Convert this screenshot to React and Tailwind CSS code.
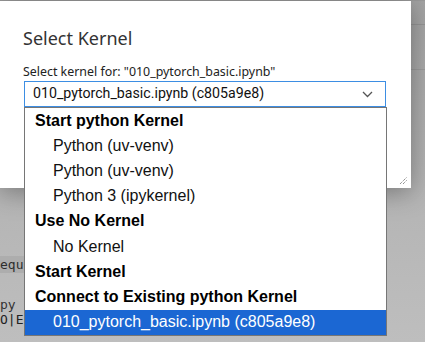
import React from 'react';

const items = [
  { label: 'Start python Kernel', header: true },
  { label: 'Python (uv-venv)' },
  { label: 'Python (uv-venv)' },
  { label: 'Python 3 (ipykernel)' },
  { label: 'Use No Kernel', header: true },
  { label: 'No Kernel' },
  { label: 'Start Kernel', header: true },
  { label: 'Connect to Existing python Kernel', header: true },
  { label: '010_pytorch_basic.ipynb (c805a9e8)', selected: true },
];

const arial = { fontFamily: '"Liberation Sans", Arial, sans-serif' };

export default function App() {
  return (
    <div className="relative w-[425px] h-[342px] overflow-hidden bg-[#bdbdbd]">
      {/* page behind the overlay */}
      <div className="flex flex-col h-full bg-gradient-to-b from-[#a3a3a3] via-[#b3b3b3] to-[#bebebe]">
        <div className="h-px bg-[#9a9a9a]" />
        <div className="h-[24px] border-b border-[#959595]" />
        <div className="h-[45px] border-b border-[#9c9c9c]" />
        <div className="h-[186px]" />
        <div
          className="h-[17px] w-[40px] bg-[#adadad] text-[#2e2e2e] text-[13px] leading-[17px] whitespace-nowrap"
          style={{ fontFamily: '"DejaVu Sans Mono", monospace' }}
        >
          equ:
        </div>
        <div
          className="mt-[25px] text-[13px] leading-[14px] text-[#333] whitespace-nowrap"
          style={{ fontFamily: '"DejaVu Sans Mono", monospace' }}
        >
          py <span className="text-[#8a5a1a]">r</span>
        </div>
        <div
          className="text-[13px] leading-[15px] text-[#222] whitespace-nowrap"
          style={{ fontFamily: '"DejaVu Sans Mono", "Noto Sans CJK KR", monospace' }}
        >
          O|E
        </div>
      </div>

      {/* dialog */}
      <div className="absolute left-0 top-px w-[411px] h-[187px] bg-white shadow-[0_4px_24px_rgba(0,0,0,0.35)]">
        <div className="pl-[23px] pt-[26px]">
          <div
            className="text-[18px] leading-[22px] text-[#333]"
            style={{ fontFamily: '"Noto Sans", sans-serif' }}
          >
            Select Kernel
          </div>
          <div
            className="mt-[16px] text-[12.4px] leading-[14px] text-[#222]"
            style={{ fontFamily: '"Noto Sans", sans-serif' }}
          >
            Select kernel for: "010_pytorch_basic.ipynb"
          </div>
          <div
            className="mt-[2px] ml-px w-[362px] h-[26px] border border-[#3d8ee3] flex items-center pl-[8px] pr-[12px] text-[14.2px] text-[#111]"
            style={{ fontFamily: 'Roboto, "Liberation Sans", sans-serif' }}
          >
            <span className="flex-1">010_pytorch_basic.ipynb (c805a9e8)</span>
            <svg width="11" height="7" viewBox="0 0 11 7">
              <path d="M1 1l4.5 4.5L10 1" fill="none" stroke="#555" strokeWidth="1.3" />
            </svg>
          </div>
        </div>
        {/* button edge behind list */}
        <div className="absolute left-[300px] top-[131px] w-[87px] h-[31px] bg-[#1a73e8]" />
        {/* resize handle */}
        <svg className="absolute right-[3px] bottom-[3px]" width="9" height="9" viewBox="0 0 9 9">
          <path d="M1 8L8 1M4 8L8 4" stroke="#666" strokeWidth="1" strokeDasharray="1 1" />
        </svg>
      </div>

      {/* dropdown list */}
      <div
        className="absolute left-[24px] top-[107px] w-[363px] border border-[#767676] bg-white flex flex-col"
        style={arial}
      >
        {items.map((it, i) => (
          <div
            key={i}
            className={`h-[25.2px] flex items-center text-[16px] ${
              it.header ? 'pl-[10px] font-bold text-black' : 'pl-[28px]'
            } ${it.selected ? 'bg-[#1b67d3] text-white' : 'text-[#111]'}`}
          >
            {it.label}
          </div>
        ))}
      </div>
    </div>
  );
}
